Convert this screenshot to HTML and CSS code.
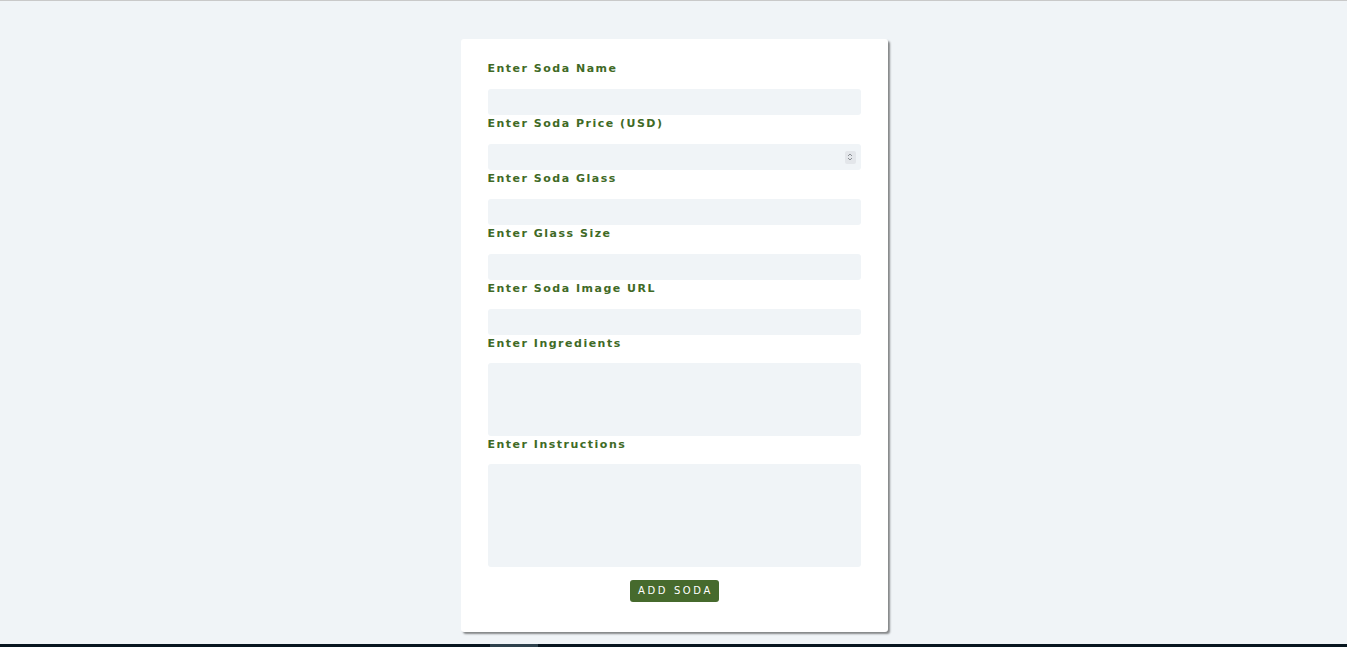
FILE: index.html
```html
<!DOCTYPE html>
<html lang="en">
<head>
<meta charset="utf-8">
<title>Add Soda</title>
<link rel="stylesheet" href="styles.css">
</head>
<body>
<div class="topline"></div>
<main class="page">
  <form class="card">
    <label class="field-label">Enter Soda Name</label>
    <input class="field" type="text">
    <label class="field-label">Enter Soda Price (USD)</label>
    <div class="field number-field"><span class="spinner"><svg width="8" height="10" viewBox="0 0 8 10"><path d="M2 4 L4 2 L6 4 M2 6 L4 8 L6 6" fill="none" stroke="#8a8f94" stroke-width="1"/></svg></span></div>
    <label class="field-label">Enter Soda Glass</label>
    <input class="field" type="text">
    <label class="field-label">Enter Glass Size</label>
    <input class="field" type="text">
    <label class="field-label">Enter Soda Image URL</label>
    <input class="field" type="text">
    <label class="field-label">Enter Ingredients</label>
    <textarea class="area area-sm"></textarea>
    <label class="field-label">Enter Instructions</label>
    <textarea class="area area-lg"></textarea>
    <div class="actions"><button type="button" class="btn">ADD SODA</button></div>
  </form>
</main>
<footer class="footer"><span class="footer-tab"></span></footer>
</body>
</html>
```

FILE: styles.css
```css
html, body {
  margin: 0;
  padding: 0;
  background: #f0f4f7;
  font-family: "DejaVu Sans", Verdana, sans-serif;
  overflow: hidden;
}
.topline {
  height: 1px;
  background: #c9c9c9;
}
.page {
  display: flex;
  justify-content: center;
  padding: 38px 0 12px 1px;
}
.card {
  width: 427px;
  box-sizing: border-box;
  background: #ffffff;
  border-radius: 3px;
  box-shadow: 2px 2px 2px rgba(0,0,0,0.45);
  padding: 21px 27px 30px 27px;
  display: flex;
  flex-direction: column;
}
.field-label {
  display: block;
  height: 29px;
  line-height: 18px;
  font-size: 11px;
  font-weight: bold;
  letter-spacing: 1.5px;
  color: #3f6a26;
}
.field {
  display: block;
  height: 26px;
  box-sizing: border-box;
  border: none;
  border-radius: 3px;
  background: #f0f4f7;
  margin: 0;
  padding: 0 8px;
  outline: none;
}
.number-field {
  display: flex;
  align-items: center;
  justify-content: flex-end;
  padding-right: 5px;
}
.spinner {
  display: flex;
  align-items: center;
  justify-content: center;
  width: 11px;
  height: 13px;
  background: #e3e6ea;
  border-radius: 2px;
}
.area {
  display: block;
  box-sizing: border-box;
  border: none;
  border-radius: 3px;
  background: #f0f4f7;
  resize: none;
  margin: -1px 0 0 0;
  padding: 0;
  outline: none;
}
.area-sm { height: 73px; }
.area-lg { height: 103px; }
.actions {
  display: flex;
  justify-content: center;
  padding-top: 13px;
}
.btn {
  width: 89px;
  height: 22px;
  border: none;
  border-radius: 3px;
  background: #466a2d;
  color: #ffffff;
  font-family: "DejaVu Sans", Verdana, sans-serif;
  font-size: 10px;
  line-height: 20px;
  letter-spacing: 2.6px;
  padding: 0 0 0 3px;
  margin: 0;
}
.footer {
  display: block;
  height: 40px;
  background: #08161f;
}
.footer-tab {
  display: block;
  margin-left: 490px;
  width: 48px;
  height: 40px;
  background: #2e414c;
}
```
